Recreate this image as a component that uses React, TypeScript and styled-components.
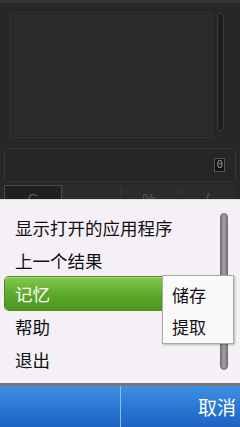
import React from "react";
import styled, { createGlobalStyle } from "styled-components";

const GlobalStyle = createGlobalStyle`
  html, body {
    margin: 0;
    padding: 0;
    background: #272727;
  }
  * {
    box-sizing: border-box;
  }
  body {
    font-family: "Noto Sans CJK SC", "Noto Sans", sans-serif;
  }
`;

const Screen = styled.div`
  width: 240px;
  height: 427px;
  display: flex;
  flex-direction: column;
  overflow: hidden;
  background: #272727;
`;

const Calculator = styled.div`
  height: 199px;
  flex: 0 0 199px;
  overflow: hidden;
  border-top: 3px solid #353535;
  padding: 9px 4px 0 4px;
  display: flex;
  flex-direction: column;

  > * {
    flex-shrink: 0;
  }
`;

const DisplayRow = styled.div`
  display: flex;
  gap: 5px;
  height: 126px;
  padding: 0 12px 0 6px;
`;

const History = styled.div`
  flex: 1;
  background: #2b2b2b;
  border: 1px solid #323232;
  box-shadow: inset 0 0 0 1px #262626;
`;

const DisplayScroll = styled.div`
  width: 7px;
  height: 118px;
  margin-top: 1px;
  border-radius: 4px;
  background: #1d1d1d;
  border: 1px solid #3a3a3a;
`;

const ResultBox = styled.div`
  margin-top: 10px;
  height: 34px;
  background: #262626;
  border: 1px solid #353535;
  border-radius: 2px;
  display: flex;
  align-items: center;
  justify-content: flex-end;
  padding-right: 10px;
`;

const Digit = styled.span`
  font-family: "DejaVu Sans Mono", monospace;
  font-size: 11px;
  line-height: 12px;
  color: #9a9a9a;
  background: #111;
  border: 1px solid #555;
  padding: 0 1px;
`;

const KeyRow = styled.div`
  margin-top: 3px;
  display: grid;
  grid-template-columns: 58px 1fr 1fr 1fr;
  height: 26px;
`;

const Key = styled.div<{ $boxed?: boolean }>`
  border: 1px solid ${(p) => (p.$boxed ? "#4a4a4a" : "transparent")};
  border-left: 1px solid ${(p) => (p.$boxed ? "#4a4a4a" : "#333")};
  background: ${(p) => (p.$boxed ? "#202020" : "#2c2c2c")};
  color: #5a5a5a;
  font-family: "Liberation Sans", sans-serif;
  font-size: 15px;
  display: flex;
  justify-content: center;
  padding-top: 4px;
`;

const Menu = styled.div`
  flex: 1;
  position: relative;
  background: #f5f0f5;
  border-top: 1px solid #ddd;
  padding: 11px 14px 0 5px;
  display: flex;
  flex-direction: column;
`;

const MenuItem = styled.div<{ $active?: boolean }>`
  height: 33px;
  display: flex;
  align-items: center;
  padding-left: 10px;
  font-size: 17.5px;
  color: ${(p) => (p.$active ? "#ffffff" : "#111")};
  border-radius: 4px;
  width: 160px;
  white-space: nowrap;
  ${(p) =>
    p.$active &&
    `
    background: linear-gradient(#82c84f, #5ca82a 55%, #4c961e);
    box-shadow: inset 0 1px 0 #a7dc80, 0 0 0 1px #4a8c22;
  `}
`;

const MenuScroll = styled.div`
  position: absolute;
  right: 12px;
  top: 13px;
  width: 8px;
  height: 157px;
  border-radius: 4px;
  background: linear-gradient(90deg, #7d7d7d, #a2a2a2 50%, #7d7d7d);
  border: 1px solid #6d6d6d;
`;

const Submenu = styled.div`
  position: absolute;
  left: 162px;
  top: 75px;
  width: 72px;
  height: 69px;
  background: #fbfafb;
  border: 1px solid #a9a9a9;
  box-shadow: 1px 1px 2px rgba(0, 0, 0, 0.25);
  padding-top: 2px;
  display: flex;
  flex-direction: column;
  z-index: 2;
`;

const SubItem = styled.div`
  height: 32px;
  display: flex;
  align-items: center;
  padding-left: 9px;
  font-size: 17px;
  color: #111;
`;

const Separator = styled.div`
  height: 3px;
  flex: 0 0 3px;
  background: #767676;
`;

const SoftkeyBar = styled.div`
  height: 41px;
  flex: 0 0 41px;
  display: grid;
  grid-template-columns: 120px 1fr;
  background: linear-gradient(#3f90e2, #2a76d2 55%, #1c63c2);
`;

const Softkey = styled.div<{ $right?: boolean }>`
  display: flex;
  align-items: center;
  justify-content: flex-end;
  padding-right: 4px;
  color: #ffffff;
  font-size: 19px;
  border-left: ${(p) => (p.$right ? "1px solid #8cc0f2" : "none")};
`;

const menuItems = ["显示打开的应用程序", "上一个结果", "记忆", "帮助", "退出"];

export default function App() {
  return (
    <>
      <GlobalStyle />
      <Screen>
        <Calculator>
          <DisplayRow>
            <History />
            <DisplayScroll />
          </DisplayRow>
          <ResultBox>
            <Digit>0</Digit>
          </ResultBox>
          <KeyRow>
            <Key $boxed>C</Key>
            <Key>–</Key>
            <Key>%</Key>
            <Key>/</Key>
          </KeyRow>
        </Calculator>
        <Menu>
          {menuItems.map((item) => (
            <MenuItem key={item} $active={item === "记忆"}>
              {item}
            </MenuItem>
          ))}
          <MenuScroll />
          <Submenu>
            <SubItem>储存</SubItem>
            <SubItem>提取</SubItem>
          </Submenu>
        </Menu>
        <Separator />
        <SoftkeyBar>
          <Softkey />
          <Softkey $right>取消</Softkey>
        </SoftkeyBar>
      </Screen>
    </>
  );
}
